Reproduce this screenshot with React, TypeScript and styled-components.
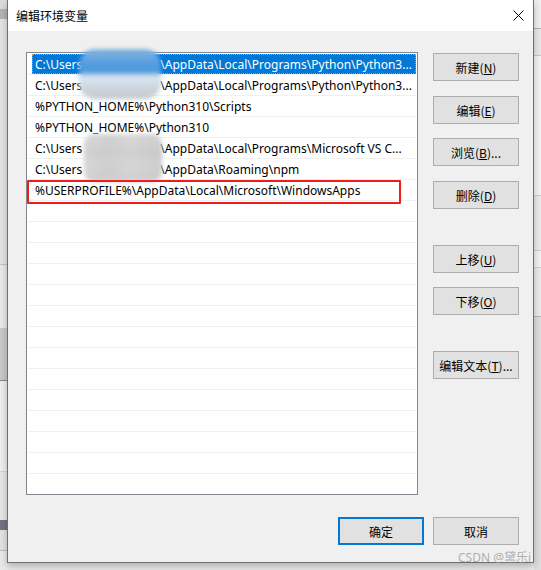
import React from "react";
import styled, { createGlobalStyle, css } from "styled-components";

const GlobalStyle = createGlobalStyle`
  html, body { margin: 0; padding: 0; background: #e9e9e9; }
  body { font-family: "Noto Sans", "Noto Sans CJK SC", sans-serif; }
  #root { width: 541px; height: 570px; }
`;

const Page = styled.div`
  position: relative;
  width: 541px;
  height: 570px;
  overflow: hidden;
  display: flex;
  align-items: flex-start;
  background: #e9e9e9;
`;

const Strip = styled.div`
  width: 7px;
  height: 570px;
  flex: none;
  display: flex;
  flex-direction: column;
`;

const Band = styled.div<{ $h: number; $bg: string; $line?: string }>`
  height: ${(p) => p.$h}px;
  flex: none;
  background: ${(p) => p.$bg};
  border-bottom: ${(p) => (p.$line ? `1px solid ${p.$line}` : "none")};
`;

const Dialog = styled.div`
  width: 527px;
  height: 563px;
  flex: none;
  box-sizing: border-box;
  border: 1px solid #6f6f6f;
  border-top: none;
  background: #f0f0f0;
  display: flex;
  flex-direction: column;
  box-shadow: 0 3px 7px rgba(0, 0, 0, 0.25);
  position: relative;
  z-index: 1;
`;

const TitleBar = styled.div`
  height: 31px;
  flex: none;
  background: #ffffff;
  display: flex;
  align-items: center;
  justify-content: space-between;
  padding: 0 9px 0 8px;
`;

const Title = styled.span`
  font: 12px "Noto Sans CJK SC", sans-serif;
  color: #000;
`;

const CloseIcon = styled.svg`
  display: block;
  width: 11px;
  height: 11px;
`;

const Body = styled.div`
  flex: 1;
  display: flex;
  flex-direction: column;
  padding: 21px 14px 17px 18px;
`;

const Main = styled.div`
  display: flex;
  gap: 15px;
  height: 443px;
`;

const ListWrap = styled.div`
  position: relative;
  width: 392px;
  height: 443px;
  flex: none;
`;

const ListBox = styled.div`
  width: 392px;
  height: 443px;
  box-sizing: border-box;
  border: 1px solid #828790;
  background: #fff;
  padding: 1px 1px 0 1px;
  overflow: hidden;
`;

const Row = styled.div`
  height: 21px;
  box-sizing: border-box;
  border-bottom: 1px solid #f0f0f0;
  display: flex;
  padding-left: 4px;
`;

const Cell = styled.div<{ $selected?: boolean }>`
  flex: 1;
  height: 20px;
  box-sizing: border-box;
  padding-left: 3px;
  font: 12px/22px "Noto Sans", "Noto Sans CJK SC", sans-serif;
  color: #000;
  white-space: nowrap;
  overflow: hidden;
  ${(p) =>
    p.$selected &&
    css`
      background: #0078d7;
      color: #fff;
      outline: 1px dotted #ff8728;
      outline-offset: -1px;
    `}
`;

const Redacted = styled.span`
  display: inline-block;
  width: 78px;
`;

const Blur = styled.div<{ $variant: "blue" | "gray" }>`
  position: absolute;
  filter: blur(2px);
  border-radius: 16px;
  ${(p) =>
    p.$variant === "blue"
      ? css`
          left: 53px;
          top: -3px;
          width: 82px;
          height: 50px;
          background: linear-gradient(
            180deg,
            #86b6de 0%,
            #5aa0e0 25%,
            #4b97de 45%,
            #dce6ef 55%,
            #ced8e2 75%,
            #c4c8cc 100%
          );
        `
      : css`
          left: 58px;
          top: 82px;
          width: 78px;
          height: 48px;
          border-radius: 10px;
          background: linear-gradient(
              90deg,
              rgba(255, 255, 255, 0) 0%,
              rgba(200, 200, 200, 0.5) 30%,
              rgba(210, 210, 210, 0.3) 60%,
              rgba(195, 195, 195, 0.5) 100%
            ),
            linear-gradient(180deg, #dcdcdc 0%, #cfcfcf 40%, #d8d8d8 60%, #d0d0d0 100%);
        `}
`;

const Highlight = styled.div`
  position: absolute;
  left: 1px;
  top: 128px;
  width: 374px;
  height: 24px;
  box-sizing: border-box;
  border: 2px solid #ee1c1c;
  border-radius: 1px;
`;

const ButtonColumn = styled.div`
  display: flex;
  flex-direction: column;
`;

const Button = styled.button<{ $mt?: number; $primary?: boolean }>`
  width: 86px;
  height: 28px;
  box-sizing: border-box;
  margin: ${(p) => p.$mt ?? 0}px 0 0 0;
  padding: 0;
  background: #e1e1e1;
  border: 1px solid #adadad;
  border-radius: 0;
  font: 12px "Noto Sans CJK SC", sans-serif;
  color: #000;
  display: flex;
  align-items: center;
  justify-content: center;
  ${(p) =>
    p.$primary &&
    css`
      border: 2px solid #0078d7;
    `}
`;

const Footer = styled.div`
  margin-top: 22px;
  display: flex;
  justify-content: flex-end;
  gap: 9px;
`;

const Watermark = styled.div`
  position: absolute;
  left: 458px;
  top: 548px;
  z-index: 2;
  font: 12px "Noto Sans", "Noto Sans CJK SC", sans-serif;
  color: rgba(150, 150, 150, 0.75);
`;

type Item = { pre: string; post?: string; selected?: boolean };

const items: Item[] = [
  { pre: "C:\\Users", post: "\\AppData\\Local\\Programs\\Python\\Python3...", selected: true },
  { pre: "C:\\Users", post: "\\AppData\\Local\\Programs\\Python\\Python3..." },
  { pre: "%PYTHON_HOME%\\Python310\\Scripts" },
  { pre: "%PYTHON_HOME%\\Python310" },
  { pre: "C:\\Users", post: "\\AppData\\Local\\Programs\\Microsoft VS C..." },
  { pre: "C:\\Users", post: "\\AppData\\Roaming\\npm" },
  { pre: "%USERPROFILE%\\AppData\\Local\\Microsoft\\WindowsApps" },
];

const TOTAL_ROWS = 21;

const sideButtons: { label: string; key: string; tail?: string; mt: number }[] = [
  { label: "新建", key: "N", mt: 1 },
  { label: "编辑", key: "E", mt: 15 },
  { label: "浏览", key: "B", tail: "...", mt: 14 },
  { label: "删除", key: "D", mt: 15 },
  { label: "上移", key: "U", mt: 36 },
  { label: "下移", key: "O", mt: 14 },
  { label: "编辑文本", key: "T", tail: "...", mt: 36 },
];

const leftBands = [
  { h: 9, bg: "#dcdcdc" },
  { h: 10, bg: "#b4b4b4" },
  { h: 245, bg: "#e4e4e4", line: "#c4c4c4" },
  { h: 63, bg: "#e9e9e9" },
  { h: 52, bg: "#c9c9c9", line: "#8a8a8a" },
  { h: 90, bg: "#eeeeee", line: "#d4d4d4" },
  { h: 48, bg: "#e6e6e6" },
  { h: 10, bg: "#737380" },
  { h: 20, bg: "#e2e2e2", line: "#bcbcbc" },
  { h: 20, bg: "#e9e9e9" },
];

const rightBands = [
  { h: 28, bg: "#f0f0f0", line: "#b0b0b0" },
  { h: 26, bg: "#e8e8e8", line: "#c8c8c8" },
  { h: 139, bg: "#f4f4f4", line: "#cfcfcf" },
  { h: 54, bg: "#ebebeb", line: "#cfcfcf" },
  { h: 16, bg: "#f2f2f2", line: "#cfcfcf" },
  { h: 48, bg: "#ebebeb", line: "#b8b8b8" },
  { h: 257, bg: "#dedede" },
];

export default function App() {
  return (
    <>
      <GlobalStyle />
      <Page>
        <Strip>
          {leftBands.map((b, i) => (
            <Band key={i} $h={b.h} $bg={b.bg} $line={b.line} />
          ))}
        </Strip>
        <Dialog>
          <TitleBar>
            <Title>编辑环境变量</Title>
            <CloseIcon viewBox="0 0 11 11">
              <path d="M0.5 0.5 L10.5 10.5 M10.5 0.5 L0.5 10.5" stroke="#000" strokeWidth="1" fill="none" />
            </CloseIcon>
          </TitleBar>
          <Body>
            <Main>
              <ListWrap>
                <ListBox>
                  {Array.from({ length: TOTAL_ROWS }).map((_, i) => {
                    const it = items[i];
                    return (
                      <Row key={i}>
                        <Cell $selected={it?.selected}>
                          {it ? (
                            <>
                              {it.pre}
                              {it.post && (
                                <>
                                  <Redacted />
                                  {it.post}
                                </>
                              )}
                            </>
                          ) : null}
                        </Cell>
                      </Row>
                    );
                  })}
                </ListBox>
                <Blur $variant="blue" />
                <Blur $variant="gray" />
                <Highlight />
              </ListWrap>
              <ButtonColumn>
                {sideButtons.map((b) => (
                  <Button key={b.key} $mt={b.mt}>
                    {b.label}(<u>{b.key}</u>){b.tail}
                  </Button>
                ))}
              </ButtonColumn>
            </Main>
            <Footer>
              <Button $primary>确定</Button>
              <Button>取消</Button>
            </Footer>
          </Body>
        </Dialog>
        <Strip>
          {rightBands.map((b, i) => (
            <Band key={i} $h={b.h} $bg={b.bg} $line={b.line} />
          ))}
        </Strip>
        <Watermark>CSDN @黛乐i</Watermark>
      </Page>
    </>
  );
}
